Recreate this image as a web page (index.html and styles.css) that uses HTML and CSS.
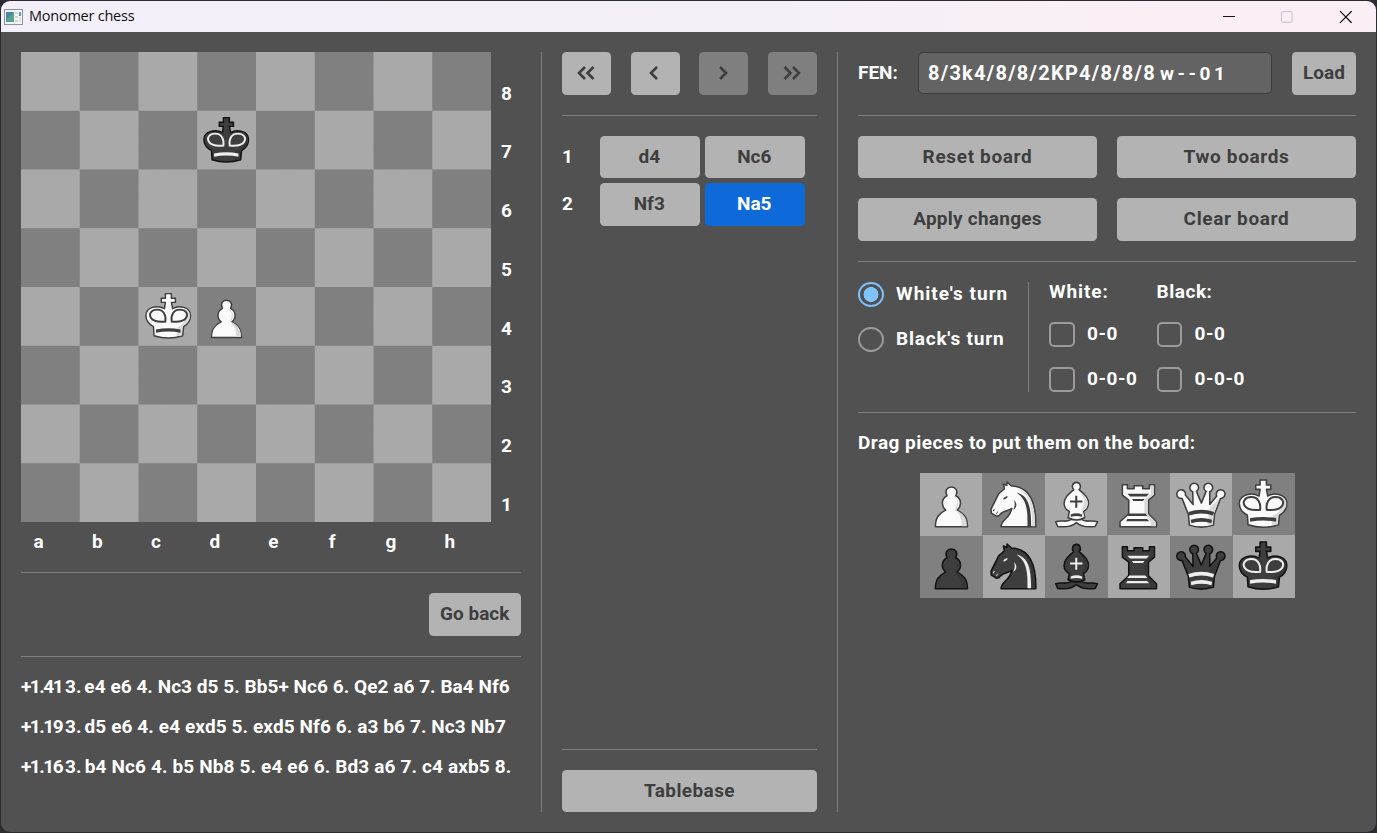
FILE: index.html
```html
<!DOCTYPE html>
<html lang="en">
<head>
<meta charset="utf-8">
<title>Monomer chess</title>
<link rel="stylesheet" href="styles.css">
</head>
<body>
<svg class="defs" width="0" height="0">
  <symbol id="pawn" viewBox="0 0 187 187">
    <path class="body" d="M46 161C46 132 58 120 77 111C62 99 64 76 81 68C73 52 82 42 94 42C106 42 115 52 107 68C124 76 126 99 111 111C130 120 142 132 142 161Z"/>
    <path class="shade" d="M104 46Q112 58 102 69Q119 84 104 111Q126 126 125 159H140C140 134 130 122 108 111Q123 88 104 69Q111 54 104 46Z"/>
  </symbol>
  <symbol id="knight" viewBox="0 0 187 187">
    <path class="body" d="M57 161C57 138 84 138 89 106C80 114 68 112 58 120L50 128L43 129L28 120L27 108L42 78L50 62L67 47L64 33L74 37L75 27L88 39C122 40 163 60 161 161Z"/>
    <path class="shade" d="M104 48C142 60 150 95 150 159H159C159 85 135 52 104 48Z"/>
    <path class="mark" d="M103 58C139 66 147 100 147 159H136C137 110 134 78 103 58Z"/>
    <path class="mark" d="M96 81C107 92 104 106 93 110C99 101 99 92 96 81ZM63 79Q65 71 77 69Q75 79 63 79ZM32 111L39 107L35 116ZM41 121L49 113L45 122Z"/>
  </symbol>
  <symbol id="bishop" viewBox="0 0 187 187">
    <path class="body" d="M94 148C82 160 62 163 38 160L32 146C52 139 64 150 79 139H109C124 150 136 139 157 146L150 160C126 163 106 160 94 148Z"/>
    <path class="body" d="M86 50C78 41 83 28 94 28C105 28 110 41 102 50C116 62 131 73 130 92C129 104 122 112 115 115L119 134C104 142 84 142 69 134L73 115C66 112 58 104 57 92C57 73 72 62 86 50Z"/>
    <path class="shade" d="M106 58Q125 78 110 113L114 132L118 132L113 114C132 104 137 78 106 58Z"/>
    <path class="mark" d="M90.500 68H96.500V82.500H112V88.500H96.500V104H90.500V88.500H75V82.500H90.500ZM77 124Q94 117 111 124V131Q94 126 77 131Z"/>
  </symbol>
  <symbol id="rook" viewBox="0 0 187 187">
    <path class="body" d="M46 35H61V47H81V38H107V47H127V35H142V66L124 81V122L148 146V161H39V146L65 122V81L46 66Z"/>
    <path class="shade" d="M131 38H140V65L122 80V123L146 147V159H131V146L112 122V79L131 63Z"/>
    <path class="mark" d="M61 62H126L118 70H69ZM75 78H112L108 84H79ZM67 121H115L121 129H60ZM61 138H120L126 144H57Z"/>
  </symbol>
  <symbol id="queen" viewBox="0 0 187 187">
    <path class="body" d="M55 124L36 76A13 13 0 1 1 46 66L69 94L68 56A13 13 0 1 1 79 55L94 90L108 55A13 13 0 1 1 119 56L119 94L140 69A13 13 0 1 1 151 76L133 124L130 156Q94 168 58 156Z"/>
    <path class="shade" d="M148 76L119 103L112 156L128 154L131 123Z"/>
    <path class="mark" d="M55 117Q94 103 132 117L129 127Q94 115 58 127ZM62 140Q94 130 126 140L124 150Q94 142 64 150Z"/>
  </symbol>
  <symbol id="king" viewBox="0 0 187 187">
    <path class="body" d="M84 21H103V36H116V49H103L107 69C126 58 164 62 164 91C164 107 155 119 142 126L139 155Q94 170 48 155L46 126C32 119 22 107 22 91C22 62 61 58 81 69L84 49H71V36H84Z"/>
    <path class="shade" d="M142 69C174 79 166 110 138 123L136 154L120 156L122 128C145 119 155 100 142 69Z"/>
    <path class="ring" d="M84 110C87 90 78 72 58 72C39 72 30 86 38 98C45 111 61 112 84 110ZM104 110C101 90 109 72 130 72C149 72 158 86 150 98C143 111 127 112 104 110Z"/>
    <path class="mark" d="M54 135Q94 128 132 135V146Q94 138 54 146Z"/>
  </symbol>
</svg>

<div class="window">
  <header class="titlebar">
    <svg class="app-icon" viewBox="0 0 19 16"><rect x=".5" y=".5" width="18" height="15" fill="#f4f6f6" stroke="#8d949c"/><path d="M2 3h8v10H2z" fill="#58a38c"/><path d="M2 3h8L2 11z" fill="#4e86a8"/><path d="M11 3h3v2h-3zM11 7h3v2h-3zM11 11h3v2h-3z" fill="#d3d9d2"/><path d="M15 3h2v4h-2z" fill="#559bd0"/><path d="M15 8h2v5h-2z" fill="#dfe6e2"/></svg>
    <span class="title">Monomer chess</span>
    <svg class="controls" viewBox="0 0 130 14" fill="none"><path d="M1 6.500h12" stroke="#111" stroke-width="1.2"/><rect x="59.500" y="1.700" width="10.600" height="10.600" rx="1" stroke="#cdbfc8"/><path d="M118 1.200l11.600 11.600M129.600 1.200l-11.600 11.600" stroke="#111" stroke-width="1.2"/></svg>
  </header>

  <main class="content">
    <section class="left">
      <div class="board-row">
        <div class="board" id="board">
          <i></i><i></i><i></i><i></i><i></i><i></i><i></i><i></i>
          <i></i><i></i><i></i><i><svg class="black"><use href="#king"/></svg></i><i></i><i></i><i></i><i></i>
          <i></i><i></i><i></i><i></i><i></i><i></i><i></i><i></i>
          <i></i><i></i><i></i><i></i><i></i><i></i><i></i><i></i>
          <i></i><i></i><i><svg class="white"><use href="#king"/></svg></i><i><svg class="white"><use href="#pawn"/></svg></i><i></i><i></i><i></i><i></i>
          <i></i><i></i><i></i><i></i><i></i><i></i><i></i><i></i>
          <i></i><i></i><i></i><i></i><i></i><i></i><i></i><i></i>
          <i></i><i></i><i></i><i></i><i></i><i></i><i></i><i></i>
        </div>
        <div class="ranks"><span>8</span><span>7</span><span>6</span><span>5</span><span>4</span><span>3</span><span>2</span><span>1</span></div>
      </div>
      <div class="files"><span>a</span><span>b</span><span>c</span><span>d</span><span>e</span><span>f</span><span>g</span><span>h</span></div>
      <hr>
      <div class="back-row"><button class="go-back">Go back</button></div>
      <hr>
      <div class="lines">
        <p class="l1"><span class="lead"><span class="score">+1.41</span> 3. </span>e4 e6 4. Nc3 d5 5. Bb5+ Nc6 6. Qe2 a6 7. Ba4 Nf6</p>
        <p class="l2"><span class="lead"><span class="score">+1.19</span> 3. </span>d5 e6 4. e4 exd5 5. exd5 Nf6 6. a3 b6 7. Nc3 Nb7</p>
        <p class="l3"><span class="lead"><span class="score">+1.16</span> 3. </span>b4 Nc6 4. b5 Nb8 5. e4 e6 6. Bd3 a6 7. c4 axb5 8.</p>
      </div>
    </section>

    <section class="middle">
      <div class="nav">
        <button><svg viewBox="0 0 18 14"><path d="M8 1L2 7l6 6M16.500 1l-6 6 6 6"/></svg></button>
        <button><svg viewBox="0 0 18 14"><path d="M12 1L6 7l6 6"/></svg></button>
        <button disabled><svg viewBox="0 0 18 14"><path d="M6 1l6 6-6 6"/></svg></button>
        <button disabled><svg viewBox="0 0 18 14"><path d="M1.500 1l6 6-6 6M10 1l6 6-6 6"/></svg></button>
      </div>
      <hr>
      <div class="moves">
        <span>1</span><button>d4</button><button>Nc6</button>
        <span>2</span><button>Nf3</button><button class="current">Na5</button>
      </div>
      <hr class="push">
      <button class="tablebase">Tablebase</button>
    </section>

    <section class="right">
      <div class="fen">
        <span class="fen-label">FEN:</span>
        <div class="fen-input"><span class="placement">8/3k4/8/8/2KP4/8/8/8</span><span class="state"> w - - 0 1</span></div>
        <button class="load">Load</button>
      </div>
      <hr>
      <div class="actions">
        <button>Reset board</button><button>Two boards</button>
        <button class="apply">Apply changes</button><button>Clear board</button>
      </div>
      <hr>
      <div class="options">
        <div class="turn">
          <label><b class="radio on"></b>White's turn</label>
          <label class="black-turn"><b class="radio"></b>Black's turn</label>
        </div>
        <div class="castling white-side"><span>White:</span><label><b class="check"></b>0-0</label><label><b class="check"></b>0-0-0</label></div>
        <div class="castling"><span>Black:</span><label><b class="check"></b>0-0</label><label><b class="check"></b>0-0-0</label></div>
      </div>
      <hr>
      <p class="hint">Drag pieces to put them on the board:</p>
      <div class="palette">
        <i><svg class="white"><use href="#pawn"/></svg></i><i><svg class="white"><use href="#knight"/></svg></i><i><svg class="white"><use href="#bishop"/></svg></i><i><svg class="white"><use href="#rook"/></svg></i><i><svg class="white"><use href="#queen"/></svg></i><i><svg class="white"><use href="#king"/></svg></i>
        <i><svg class="black"><use href="#pawn"/></svg></i><i><svg class="black"><use href="#knight"/></svg></i><i><svg class="black"><use href="#bishop"/></svg></i><i><svg class="black"><use href="#rook"/></svg></i><i><svg class="black"><use href="#queen"/></svg></i><i><svg class="black"><use href="#king"/></svg></i>
      </div>
    </section>
  </main>
</div>
</body>
</html>
```

FILE: styles.css
```css
* { box-sizing: border-box; }
body { margin: 0; width: 1377px; height: 833px; overflow: hidden; background: #2b2b31; padding: 1px; font: 700 19px/24px Roboto, sans-serif; color: #fff; }
.defs { display: block; position: absolute; }
.window { width: 1375px; height: 831px; border-radius: 9px; overflow: hidden; background: #515151; display: flex; flex-direction: column; }
.titlebar { height: 31px; flex: none; display: flex; align-items: center; padding: 0 24px 0 3px; background: linear-gradient(90deg, #f3f0f9, #f5f0f8 55%, #fbeff6 85%); }
.app-icon { width: 19px; height: 16px; }
.title { font: 400 14.5px/20px "Open Sans", sans-serif; color: #111; margin-left: 6px; padding-bottom: 1px; letter-spacing: -0.24px; }
.controls { width: 130px; height: 14px; margin-left: auto; }
.content { flex: 1; display: flex; padding: 20px 20px 20px 20px; }
hr { border: 0; height: 1px; background: #7f7f7f; margin: 0; width: 100%; flex: none; }
p { margin: 0; white-space: nowrap; }
button { font: inherit; border: 0; padding: 0; margin: 0; height: 42.5px; border-radius: 4.5px; background: #b3b3b3; color: #3e3e3e; display: flex; align-items: center; justify-content: center; }
button:disabled { background: #7f7f7f; }

.left { width: 500px; display: flex; flex-direction: column; }
.board-row { display: flex; height: 470px; }
.board { width: 470px; display: grid; grid-template: repeat(8, 1fr) / repeat(8, 1fr); background: conic-gradient(#808080 25%, #a9a9a9 0 50%, #808080 0 75%, #a9a9a9 0) 0 0 / 117.5px 117.5px; }
.board i, .palette i { display: block; min-width: 0; min-height: 0; }
.board svg, .palette svg { display: block; width: 100%; height: 100%; }
.ranks { width: 30px; padding: 12.3px 0 0 10px; }
.ranks span { display: flex; align-items: center; height: 58.75px; }
.files { display: grid; grid-template-columns: repeat(8, 58.75px); height: 50px; padding-top: 8px; }
.files span { width: 35px; text-align: center; }
.back-row { display: flex; justify-content: flex-end; padding: 20px 0; height: 83px; }
.go-back { width: 92.5px; }
.lines { padding-top: 18px; display: flex; flex-direction: column; gap: 16px; }
.lead { word-spacing: -1.9px; }
.score { letter-spacing: -1.5px; }
.l1 { letter-spacing: 0.05px; }
.l2 { letter-spacing: 0.1px; }
.l3 { letter-spacing: 0.14px; }

.middle { width: 297px; margin-left: 20px; padding: 0 20px; border: solid #7f7f7f; border-width: 0 1px; display: flex; flex-direction: column; }
.nav { display: flex; justify-content: space-between; margin-bottom: 20px; }
.nav button { width: 49px; padding-right: 2px; }
.nav button:disabled { padding-right: 1px; }
.nav svg { width: 18px; height: 14px; fill: none; stroke: #3e3e3e; stroke-width: 2.6; }
.moves { display: grid; grid-template-columns: 33px 100px 100px; gap: 5px; align-items: center; padding-top: 20px; }
.moves button { padding-right: 1.5px; }
.push { margin-top: auto; margin-bottom: 20px; }
.current { background: #0f6ad9; color: #fff; }
.tablebase { letter-spacing: 0.4px; }

.right { width: 498px; margin-left: 20px; display: flex; flex-direction: column; }
.fen { display: flex; align-items: center; height: 42.5px; margin-bottom: 20px; }
.fen-label { width: 60px; }
.fen-input { width: 354px; height: 42px; border: 1px solid #3c3c3c; border-radius: 5px; background: #636363; padding: 8px 9px; white-space: pre; }
.placement { font-size: 20px; letter-spacing: 1.25px; }
.state { letter-spacing: -0.6px; }
.load { width: 64px; margin-left: auto; }
.actions { display: grid; grid-template-columns: 1fr 1fr; gap: 20px; padding: 20px 0; letter-spacing: 0.65px; }
.actions button { letter-spacing: inherit; }
.actions .apply { letter-spacing: 0.25px; }
.options { display: flex; padding: 20px 0; height: 150px; }
.turn { width: 171px; border-right: 1px solid #7f7f7f; display: flex; flex-direction: column; gap: 20px; letter-spacing: 1px; }
.black-turn { letter-spacing: 0.8px; }
.options label { display: flex; align-items: center; gap: 12.5px; height: 25px; white-space: nowrap; }
.radio { flex: none; width: 25.5px; height: 25px; border: 2px solid #9b9b9b; border-radius: 50%; }
.radio.on { border-color: #7fc3fd; background: radial-gradient(circle, #7fc3fd 7.2px, transparent 7.7px); }
.check { flex: none; width: 25.5px; height: 25px; border: 2px solid #9b9b9b; border-radius: 5px; }
.castling { margin-left: 20px; width: 87.5px; display: flex; flex-direction: column; gap: 20px; letter-spacing: 0.55px; }
.castling span { height: 20px; line-height: 19px; }
.white-side span { letter-spacing: 0.9px; }
.hint { padding-top: 18px; letter-spacing: 0.46px; }
.palette { width: 375px; height: 125px; margin: 18px 0 0 61.5px; display: grid; grid-template: 1fr 1fr / repeat(6, 1fr); background: conic-gradient(#808080 25%, #a9a9a9 0 50%, #808080 0 75%, #a9a9a9 0) 0 0 / 125px 125px; }

/* Piece colours are inherited into the symbols through custom properties. */
.white { --fill: #fafafa; --edge: #3e3e3e; --shade: #d9d9d9; --mark: #3e3e3e; }
.black { --fill: #3e3e3e; --edge: #111; --shade: #373737; --mark: #eee; }
.body { fill: var(--fill); stroke: var(--edge); stroke-width: 4.6; stroke-linejoin: round; }
.shade { fill: var(--shade); }
.mark { fill: var(--mark); }
.ring { fill: var(--fill); stroke: var(--mark); stroke-width: 6; }
```
